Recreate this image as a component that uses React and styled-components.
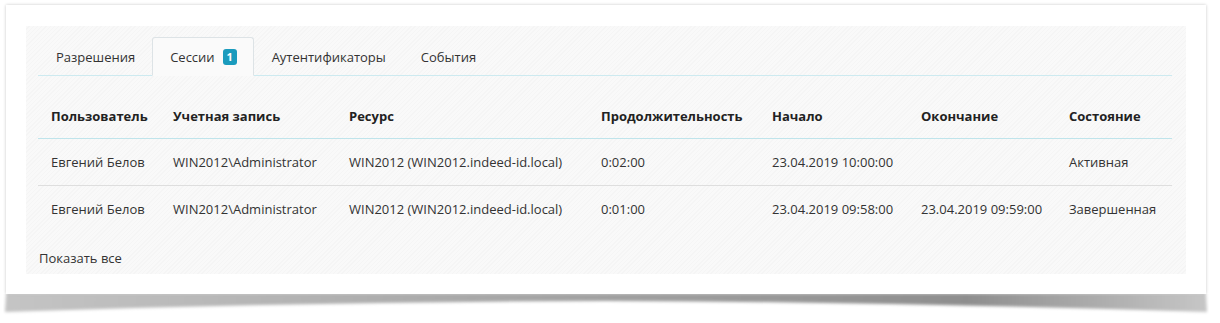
import styled, { createGlobalStyle } from "styled-components";

const GlobalStyle = createGlobalStyle`
body {
    margin: 0;
    background: #fff;
    font-family: "Open Sans", "Liberation Sans", sans-serif;
    color: #333;
}
`
const Page = styled.div`
padding: 5px 14px 0 6px;
`
const Card = styled.div`
width: 1200px;
box-sizing: border-box;
padding: 21px 20px 20px 20px;
background: #fff;
box-shadow: 0 0 3px rgba(0, 0, 0, 0.22);
position: relative;
z-index: 1;
`
const Panel = styled.div`
box-sizing: border-box;
padding: 11px 14px 7px 12px;
background-color: #f8f8f8;
background-image: repeating-linear-gradient(135deg, #f9f9f9 0px, #f9f9f9 2px, #f5f5f5 2px, #f5f5f5 3px);
`
const Tabs = styled.div`
display: flex;
height: 39px;
box-sizing: border-box;
border-bottom: 1px solid #cdeaf0;
`
const Tab = styled.div`
display: flex;
align-items: center;
column-gap: 8px;
padding: 0 16px 0 17px;
margin-bottom: -1px;
font-size: 13px;
color: #333;
box-sizing: border-box;
border: 1px solid ${props => props.active ? '#dde3e6' : 'transparent'};
border-bottom-color: ${props => props.active ? '#fafafa' : 'transparent'};
border-radius: 3px 3px 0 0;
background: ${props => props.active ? '#fafafa' : 'transparent'};
`
const Badge = styled.span`
display: inline-flex;
align-items: center;
justify-content: center;
width: 14px;
height: 16px;
border-radius: 3px;
background: #1a9bbd;
color: #fff;
font-size: 11px;
font-weight: bold;
`
const Table = styled.table`
width: 100%;
margin-top: 18px;
border-collapse: collapse;
table-layout: fixed;
font-size: 13px;
`
const Th = styled.th`
text-align: left;
font-weight: bold;
color: #222;
padding: 13px 0 13px 13px;
line-height: 18px;
border-bottom: 1px solid #bfe4eb;
white-space: nowrap;
`
const Td = styled.td`
padding: 14px 0 14px 13px;
line-height: 18px;
color: #333;
white-space: nowrap;
`
const Tr = styled.tr`
border-bottom: 1px solid ${props => props.last ? 'transparent' : '#dedede'};
`
const ShowAll = styled.div`
margin-top: 16px;
padding-left: 1px;
font-size: 13px;
line-height: 18px;
color: #333;
cursor: pointer;
`
const Shadow = styled.svg`
display: block;
margin-left: -3px;
`

const columns = [
    { label: 'Пользователь', column: 'user', width: 122 },
    { label: 'Учетная запись', column: 'account', width: 176 },
    { label: 'Ресурс', column: 'resource', width: 252 },
    { label: 'Продолжительность', column: 'duration', width: 171 },
    { label: 'Начало', column: 'start', width: 149 },
    { label: 'Окончание', column: 'end', width: 148 },
    { label: 'Состояние', column: 'state', width: 116 },
]

const sessions = [
    {
        user: 'Евгений Белов',
        account: 'WIN2012\\Administrator',
        resource: 'WIN2012 (WIN2012.indeed-id.local)',
        duration: '0:02:00',
        start: '23.04.2019 10:00:00',
        end: '',
        state: 'Активная',
    },
    {
        user: 'Евгений Белов',
        account: 'WIN2012\\Administrator',
        resource: 'WIN2012 (WIN2012.indeed-id.local)',
        duration: '0:01:00',
        start: '23.04.2019 09:58:00',
        end: '23.04.2019 09:59:00',
        state: 'Завершенная',
    },
]

const tabs = [
    { label: 'Разрешения' },
    { label: 'Сессии', count: 1, active: true },
    { label: 'Аутентификаторы' },
    { label: 'События' },
]

const App = () => {
    return (
        <>
            <GlobalStyle />
            <Page>
                <Card>
                    <Panel>
                        <Tabs>
                            {tabs.map(tab => (
                                <Tab key={tab.label} active={tab.active}>
                                    {tab.label}
                                    {tab.count ? <Badge>{tab.count}</Badge> : null}
                                </Tab>
                            ))}
                        </Tabs>
                        <Table>
                            <colgroup>
                                {columns.map(col => (
                                    <col key={col.column} style={{ width: col.width }} />
                                ))}
                            </colgroup>
                            <thead>
                                <tr>
                                    {columns.map(col => (
                                        <Th key={col.column}>{col.label}</Th>
                                    ))}
                                </tr>
                            </thead>
                            <tbody>
                                {sessions.map((item, index) => (
                                    <Tr key={index} last={index === sessions.length - 1}>
                                        {columns.map(col => (
                                            <Td key={col.column}>{item[col.column]}</Td>
                                        ))}
                                    </Tr>
                                ))}
                            </tbody>
                        </Table>
                        <ShowAll>Показать все</ShowAll>
                    </Panel>
                </Card>
                {/* curled paper shadow under the card */}
                <Shadow width="1206" height="24" viewBox="0 0 1206 24">
                    <defs>
                        <linearGradient id="shadeGrad" x1="0" y1="0" x2="1" y2="0">
                            <stop offset="0" stopColor="#c4c4c4" />
                            <stop offset="0.5" stopColor="#a0a0a0" />
                            <stop offset="0.8" stopColor="#8e8e8e" />
                            <stop offset="1" stopColor="#c6c6c6" />
                        </linearGradient>
                        <filter id="shadeBlur" x="-5%" y="-50%" width="110%" height="200%">
                            <feGaussianBlur stdDeviation="1.4" />
                        </filter>
                    </defs>
                    <path
                        d="M3 0 L1203 0 L1204 18 Q900 8 603 7 Q300 8 2 18 Z"
                        fill="url(#shadeGrad)"
                        filter="url(#shadeBlur)"
                    />
                </Shadow>
            </Page>
        </>
    )
}
export default App;
